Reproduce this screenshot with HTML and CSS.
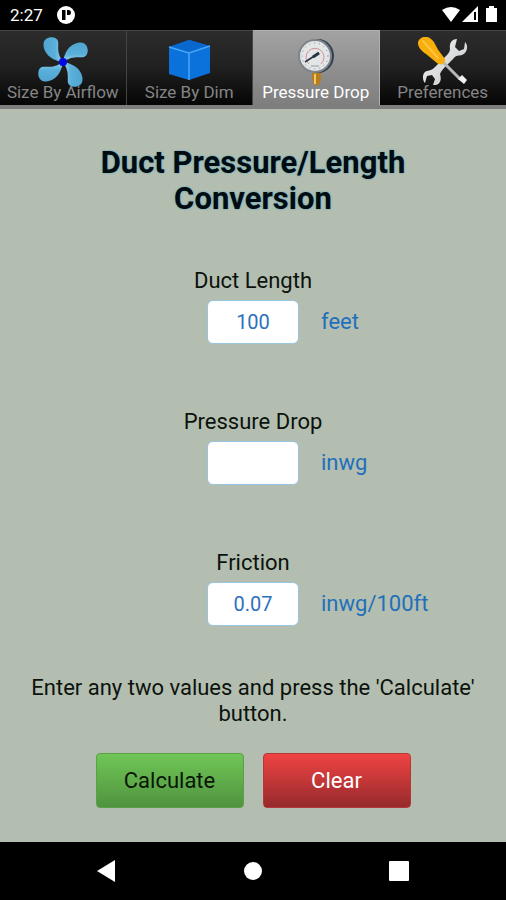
FILE: index.html
```html
<!DOCTYPE html>
<html lang="en">
<head>
<meta charset="utf-8">
<meta name="viewport" content="width=device-width, initial-scale=1">
<title>Duct Pressure/Length Conversion</title>
<link rel="stylesheet" href="styles.css">
</head>
<body>
<header class="status">
  <span class="clock">2:27</span>
  <svg class="app-mark" width="18" height="18" viewBox="0 0 18 18" aria-hidden="true">
    <circle cx="9" cy="9" r="9" fill="#fff"/>
    <path d="M5 4H8.500V14H5Z" fill="#000"/>
    <path d="M10 4H12Q14 4 14 6.500T12 9H10Z" fill="#000"/>
  </svg>
  <svg class="signals" width="56" height="18" viewBox="0 0 56 18" aria-hidden="true">
    <path d="M0 4Q9 -2 18 4L9 16Z" fill="#fff"/>
    <path d="M20 16L36 0V16Z" fill="#fff"/>
    <path d="M32 6H34V14H32Z" fill="#000"/>
    <path d="M47 0H52V2H55V16H44V2H47Z" fill="#fff"/>
  </svg>
</header>

<nav class="tabs" aria-label="Calculators">
  <a class="tab" href="#airflow">
    <svg class="tab-icon" width="50" height="50" viewBox="0 0 50 50" aria-hidden="true">
      <defs>
        <linearGradient id="blade" x1="0" y1="0" x2="1" y2="0">
          <stop offset="0" stop-color="#4fa5cf"/><stop offset=".6" stop-color="#5ab0da"/><stop offset="1" stop-color="#9bd6ee"/>
        </linearGradient>
        <path id="fan-blade" d="M25 25C18 24 12 21 9 17C5 12 4 5 8 2C12 -1 19 0 20 4C21 9 18 15 25 25Z" fill="url(#blade)"/>
      </defs>
      <use href="#fan-blade"/>
      <use href="#fan-blade" transform="rotate(90 25 25)"/>
      <use href="#fan-blade" transform="rotate(180 25 25)"/>
      <use href="#fan-blade" transform="rotate(270 25 25)"/>
      <circle cx="25" cy="25" r="4" fill="#0008e8"/>
    </svg>
    <span class="tab-label">Size By Airflow</span>
  </a>
  <a class="tab" href="#dim">
    <svg class="tab-icon" width="50" height="50" viewBox="0 0 50 50" aria-hidden="true">
      <path d="M5 10L25 3L46 9V36L25 43L5 37Z" fill="#0b72dc"/>
      <path d="M5 10L25 3L46 9L25 16Z" fill="#0868d0"/>
      <path d="M5 10L25 16L46 9M25 16V43" fill="none" stroke="#4ba5fa" stroke-width="1.500"/>
    </svg>
    <span class="tab-label">Size By Dim</span>
  </a>
  <a class="tab tab-active" href="#pressure" aria-current="page">
    <svg class="tab-icon" width="50" height="50" viewBox="0 0 50 50" aria-hidden="true">
      <path d="M21 34H30V42L28 48H23L21 42Z" fill="#b67e20"/>
      <path d="M24 37V47" stroke="#efc765" stroke-width="2"/>
      <ellipse cx="27" cy="19" rx="16" ry="17" fill="#34404f"/>
      <circle cx="24" cy="19" r="17" fill="#7d858b"/>
      <circle cx="24" cy="19" r="15" fill="#e3e6e7"/>
      <circle cx="24" cy="19" r="13" fill="none" stroke="#85898f" stroke-width="1" stroke-dasharray="1 4"/>
      <path d="M18 27A9 9 0 1 1 30 27" fill="none" stroke="#da8f98" stroke-width="1"/>
      <path d="M14 25L28 16" stroke="#27343f" stroke-width="1.500"/>
      <path d="M22 20L28 16" stroke="#27343f" stroke-width="3"/>
      <path d="M20 29H28" stroke="#999" stroke-width="1"/>
    </svg>
    <span class="tab-label">Pressure Drop</span>
  </a>
  <a class="tab" href="#preferences">
    <svg class="tab-icon" width="50" height="50" viewBox="0 0 50 50" aria-hidden="true">
      <defs>
        <linearGradient id="steel" x1="0" y1="0" x2="1" y2="1">
          <stop offset="0" stop-color="#f8f8f8"/><stop offset="1" stop-color="#bfc2c5"/>
        </linearGradient>
      </defs>
      <path d="M39 2C34 2 31 6 32 12C32 15 30 17 27 20L16 31C14 33 12 33 9 34C4 35 4 43 7 46L9 39L14 38L17 42L15 48C22 49 24 43 22 37C23 34 26 31 29 28L36 21C38 18 41 19 44 18C49 16 51 9 47 5L46 12L41 14L37 10Z" fill="url(#steel)"/>
      <path d="M26 26L42 42" stroke="#b6b9bc" stroke-width="3"/>
      <path d="M40 42L44 38L49 43L46 47Z" fill="#f1f1f1"/>
      <path d="M0 7C-1 1 8 -3 13 2C17 5 18 10 21 14L27 22C28 27 23 29 19 26L8 17C4 14 1 12 0 7Z" fill="#f8ae0c"/>
      <path d="M5 4L20 21" stroke="#ffc540" stroke-width="2" stroke-linecap="round"/>
    </svg>
    <span class="tab-label">Preferences</span>
  </a>
</nav>

<main class="content">
  <h1 class="title">Duct Pressure/Length Conversion</h1>
  <form class="form">
    <div class="field">
      <label class="field-label" for="length">Duct Length</label>
      <input class="field-input" id="length" type="text" inputmode="decimal" value="100">
      <span class="unit">feet</span>
    </div>
    <div class="field">
      <label class="field-label" for="drop">Pressure Drop</label>
      <input class="field-input" id="drop" type="text" inputmode="decimal" value="">
      <span class="unit">inwg</span>
    </div>
    <div class="field">
      <label class="field-label" for="friction">Friction</label>
      <input class="field-input" id="friction" type="text" inputmode="decimal" value="0.07">
      <span class="unit">inwg/100ft</span>
    </div>
    <p class="hint">Enter any two values and press the 'Calculate' button.</p>
    <div class="actions">
      <button class="btn btn-go" type="button">Calculate</button>
      <button class="btn btn-clear" type="reset">Clear</button>
    </div>
  </form>
</main>

<footer class="sysnav">
  <button class="sysnav-btn" type="button" aria-label="Back">
    <svg width="20" height="22" viewBox="0 0 20 22"><path d="M0 11L18 0V22Z" fill="#fff"/></svg>
  </button>
  <button class="sysnav-btn" type="button" aria-label="Home">
    <svg width="20" height="22" viewBox="0 0 20 22"><circle cx="10" cy="11" r="9" fill="#fff"/></svg>
  </button>
  <button class="sysnav-btn" type="button" aria-label="Overview">
    <svg width="20" height="22" viewBox="0 0 20 22"><rect y="1" width="20" height="20" rx="1" fill="#fff"/></svg>
  </button>
</footer>
</body>
</html>
```

FILE: styles.css
```css
* {
  box-sizing: border-box;
}

body {
  margin: 0;
  min-height: 100vh;
  display: flex;
  flex-direction: column;
  background: #b3beb1;
  color: #0c120c;
  font-family: Roboto, "Liberation Sans", sans-serif;
  font-size: 22px;
  line-height: 26px;
}

.status {
  display: flex;
  align-items: center;
  height: 30px;
  padding: 0 8px 0 10px;
  background: #000;
  color: #fff;
}

.clock {
  font-size: 17px;
}

.app-mark {
  margin-left: 14px;
}

.signals {
  margin-left: auto;
}

.tabs {
  display: grid;
  grid-template-columns: repeat(4, 1fr);
  border-bottom: 4px solid #7e7e7e;
  background: #000;
}

.tab {
  display: flex;
  flex-direction: column;
  align-items: center;
  height: 75px;
  padding-top: 6px;
  border-top: 1px solid #444;
  border-right: 1px solid #444;
  background: linear-gradient(#2c2c2c, #202020 50%, #050505);
  color: #858585;
  text-decoration: none;
}

.tab:last-child {
  border-right: 0;
}

.tab-active {
  border-color: #b0b0b0;
  background: linear-gradient(#a2a2a2, #7e7e7e);
  color: #fff;
}

.tab-icon {
  flex: none;
}

.tab-label {
  margin-top: -7px;
  font-size: 17px;
  line-height: 24px;
  white-space: nowrap;
}

.content {
  flex: 1;
  padding: 36px 24px 30px;
}

.title {
  max-width: 360px;
  margin: 0 auto 51px;
  color: #020c10;
  font-size: 31px;
  font-weight: 700;
  line-height: 36px;
  text-align: center;
  text-shadow: 0 0 2px #3c9fc0;
}

.field {
  display: grid;
  grid-template-columns: 1fr 92px 1fr;
  column-gap: 22px;
  row-gap: 6px;
  align-items: center;
  margin-bottom: 65px;
}

.field-label {
  grid-column: 1 / -1;
  justify-self: center;
}

.field-input {
  grid-column: 2;
  width: 100%;
  height: 44px;
  padding: 0;
  border: 1px solid #98c5df;
  border-radius: 6px;
  background: #fff;
  color: #2c71bd;
  font: inherit;
  font-size: 20px;
  text-align: center;
}

.unit {
  color: #1f70ba;
}

.hint {
  margin: -16px 0 26px;
  text-align: center;
}

.actions {
  display: flex;
  justify-content: center;
  gap: 19px;
}

.btn {
  width: 148px;
  height: 55px;
  padding: 0;
  border: 1px solid;
  border-radius: 4px;
  font: inherit;
}

.btn-go {
  border-color: #5aa044;
  background: linear-gradient(#70c656, #509340);
  color: #091606;
}

.btn-clear {
  border-color: #b33837;
  background: linear-gradient(#f04343, #962a2c);
  color: #fff;
}

.sysnav {
  display: flex;
  justify-content: center;
  gap: 106px;
  height: 58px;
  background: #000;
}

.sysnav-btn {
  display: flex;
  align-items: center;
  justify-content: center;
  width: 40px;
  padding: 0;
  border: 0;
  background: none;
}
```
